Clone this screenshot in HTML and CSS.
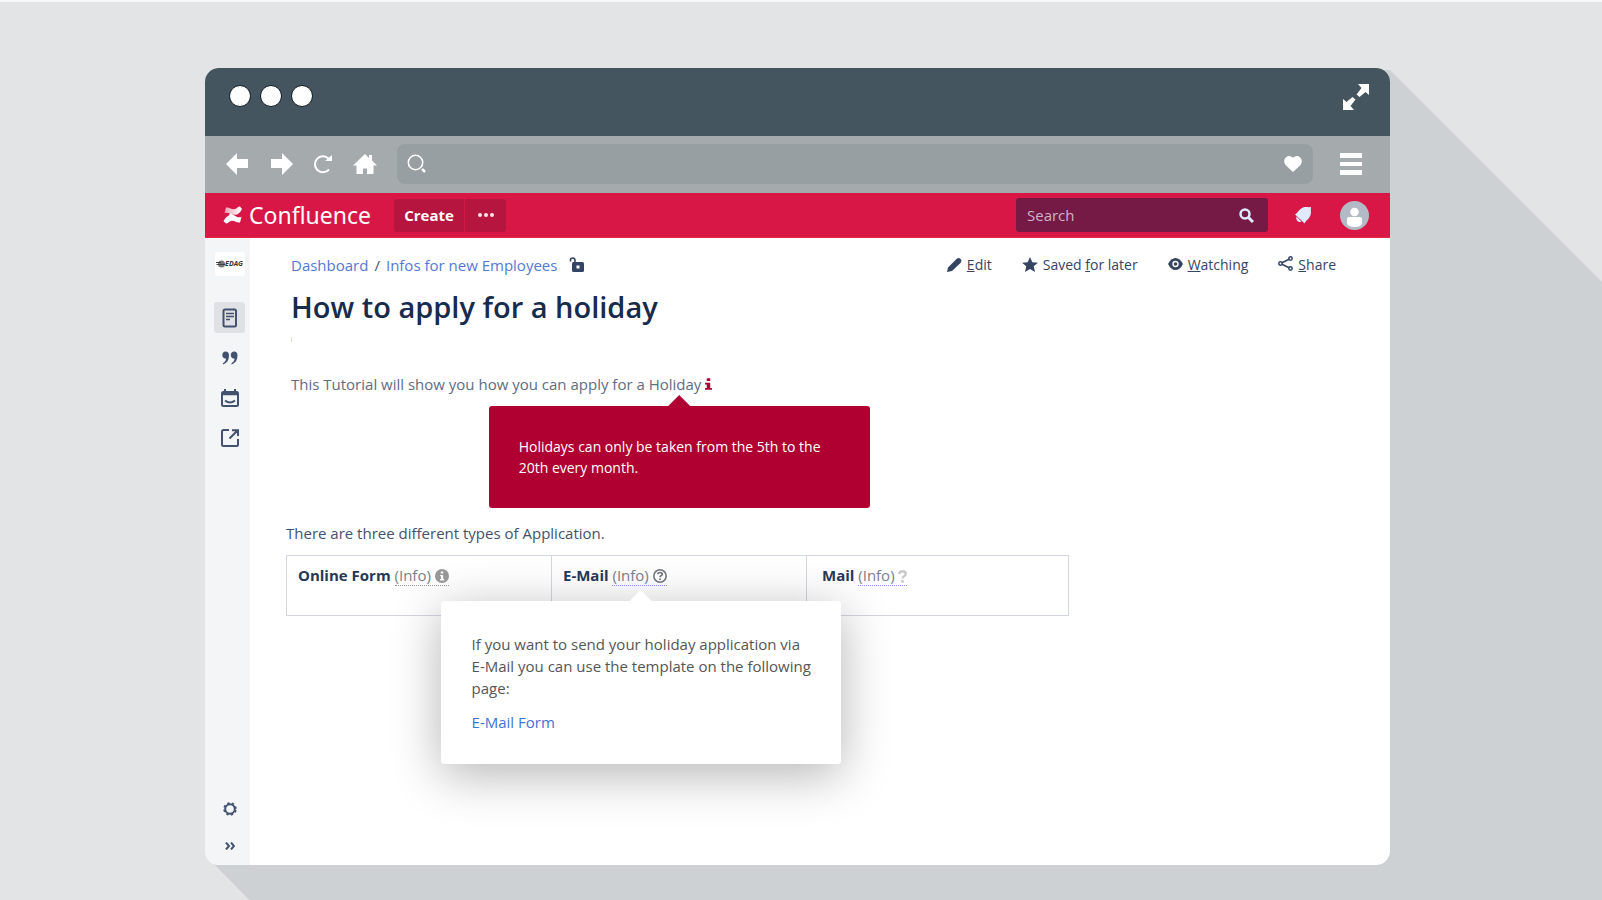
FILE: index.html
```html
<!DOCTYPE html>
<html lang="en">
<head>
<meta charset="utf-8">
<title>How to apply for a holiday - Confluence</title>
<link rel="stylesheet" href="styles.css">
</head>
<body>
<div class="stage">
  <div class="window-wrap">
    <div class="long-shadow"></div>
    <div class="window">
      <div class="titlebar">
        <div class="dots"><span class="dot"></span><span class="dot"></span><span class="dot"></span></div>
        <button class="icon-btn" aria-label="Full screen">
          <svg width="26" height="26" viewBox="0 0 26 26" fill="#fff"><path d="M15 0H26V11L22.500 8L16.500 13L13.500 10.500L18.500 4ZM0 26V15L3.500 18L9.500 13L12.500 15.500L7.500 22L11 26Z"/></svg>
        </button>
      </div>
      <div class="toolbar">
        <div class="nav">
          <button class="icon-btn" aria-label="Back"><svg width="22" height="22" viewBox="0 0 22 22" fill="#fff"><path d="M0 11L11 0V6H22V15H11V22Z"/></svg></button>
          <button class="icon-btn" aria-label="Forward"><svg width="22" height="22" viewBox="0 0 22 22" fill="#fff"><path d="M22 11L11 0V6H0V15H11V22Z"/></svg></button>
          <button class="icon-btn reload" aria-label="Reload"><svg width="20" height="20" viewBox="0 0 20 20" fill="none" stroke="#fff" stroke-width="2"><path d="M15.500 4.500A8 8 0 1 0 16 15.500"/><path d="M19 1V7H12Z" fill="#fff" stroke="none"/></svg></button>
          <button class="icon-btn" aria-label="Home"><svg width="24" height="20" viewBox="0 0 24 20" fill="#fff"><path d="M0 11.500L12 0L16 4V1H19V6.500L24 11.500H20.500V20H14V14.500H10V20H3.500V11.500Z"/></svg></button>
        </div>
        <div class="address">
          <svg width="20" height="20" viewBox="0 0 20 20" fill="none" stroke="#fff"><circle cx="8.500" cy="8.500" r="7.200" stroke-width="1.500"/><path d="M15 15L18 18" stroke-width="2.500"/></svg>
          <input class="address-input" type="text" aria-label="Address">
          <svg width="18" height="16" viewBox="0 0 18 16" fill="#fff"><path d="M9 16L2 9.500C-2 5 1.500 0 5 0C7 0 8.500 1 9 2C9.500 1 11 0 13 0C16.500 0 20 5 16 9.500Z"/></svg>
        </div>
        <button class="icon-btn" aria-label="Menu"><svg width="22" height="22" viewBox="0 0 22 22" fill="#fff"><path d="M0 0H22V5H0ZM0 9H22V13H0ZM0 17H22V22H0Z"/></svg></button>
      </div>
      <header class="appbar">
        <a class="brand" href="#">
          <svg width="20" height="20" viewBox="0 0 20 20">
            <defs><linearGradient id="fold" x1="0" x2="1"><stop offset="0" stop-color="#fff" stop-opacity=".6"/><stop offset="1" stop-color="#fff"/></linearGradient></defs>
            <path d="M3 2.500C7 2 8.500 5 12 4C14 3.500 15 1.500 17 1.500L19 4C17 8.500 14 10.500 10 9.500C7 8.500 5 7 1.500 8Z" fill="url(#fold)"/>
            <path d="M17 17.500C13 18 11.500 15 8 16C6 16.500 5 18.500 3 18.500L.500 16C3 11.500 6 9.500 10 10.500C13 11.500 15 13 18.500 12Z" fill="#fff"/>
            <path d="M7 8L14 12L9 12L5.500 11.500Z" fill="#fff"/>
          </svg>
          <span>Confluence</span>
        </a>
        <div class="create-group">
          <button class="create">Create</button>
          <button class="more" aria-label="More"><svg width="16" height="4" viewBox="0 0 16 4" fill="#ffe3ea"><circle cx="2" cy="2" r="2"/><circle cx="8" cy="2" r="2"/><circle cx="14" cy="2" r="2"/></svg></button>
        </div>
        <form class="search">
          <input class="search-input" type="text" placeholder="Search" aria-label="Search">
          <button type="button" class="icon-btn" aria-label="Search"><svg width="15" height="15" viewBox="0 0 15 15" fill="none" stroke="#deebff"><circle cx="6" cy="6" r="4.500" stroke-width="2.500"/><path d="M9.500 9.500L14 14" stroke-width="3"/></svg></button>
        </form>
        <button class="icon-btn bell" aria-label="Notifications"><svg width="18" height="18" viewBox="0 0 18 18" fill="#deebff"><path d="M1 8.500C4 7 5 3 9 1.500C12 .500 14 1.500 17 1C16.500 4 17.500 6 16.500 9C15.500 13 12 14 10.500 17.500L6.500 13.500ZM2.500 10.500L7.500 15.500C4.500 17 1.500 14.500 2.500 10.500Z"/></svg></button>
        <button class="icon-btn" aria-label="Profile"><svg width="29" height="29" viewBox="0 0 29 29"><circle cx="14.500" cy="14.500" r="14.500" fill="#b3bac5"/><circle cx="14.500" cy="11" r="4.300" fill="#fff"/><path d="M7 18Q7 16 9 16H20Q22 16 22 18V22Q22 26 14.500 26Q7 26 7 22Z" fill="#fff"/></svg></button>
      </header>
      <div class="body">
        <nav class="sidebar" aria-label="Space">
          <a class="space-logo" href="#" aria-label="EDAG"><svg width="9" height="8" viewBox="0 0 9 8" fill="#777"><ellipse cx="5.500" cy="4" rx="3.500" ry="3.500"/><path d="M0 2H5V3H0ZM1 4H9V5H0Z" fill="#444"/></svg><span>EDAG</span></a>
          <a class="side-item current" href="#" aria-label="Pages"><svg width="16" height="20" viewBox="0 0 16 20" fill="none" stroke="#42526e" stroke-width="2"><rect x="1.500" y="1.500" width="12.500" height="17" rx="1.500"/><path d="M4 5.500H12M4 8.500H12M4 11.500H8" stroke-width="1.500"/></svg></a>
          <a class="side-item" href="#" aria-label="Blog"><svg width="16" height="14" viewBox="0 0 16 14" fill="#42526e"><path d="M3.500 .500C5.800 .500 7 2 7 4.500C7 9 5 12 1.300 13.500L.800 12.500C3 11 4 9.500 4 7.500C2 8 .300 6.500 .300 4C.300 2 1.700 .500 3.500 .500ZM12 .500C14.300 .500 15.500 2 15.500 4.500C15.500 9 13.500 12 9.800 13.500L9.300 12.500C11.500 11 12.500 9.500 12.500 7.500C10.500 8 8.800 6.500 8.800 4C8.800 2 10.200 .500 12 .500Z"/></svg></a>
          <a class="side-item" href="#" aria-label="Calendars"><svg width="18" height="18" viewBox="0 0 18 18" fill="none" stroke="#42526e" stroke-width="2"><rect x="1" y="3" width="16" height="14" rx="1.500"/><path d="M1 4.500H17" stroke-width="3.500"/><path d="M4 0V3M14 0V3M4 11.500Q9 15.500 14 11.500"/></svg></a>
          <a class="side-item" href="#" aria-label="Shortcuts"><svg width="18" height="18" viewBox="0 0 18 18" fill="none" stroke="#42526e" stroke-width="2"><path d="M8 1H2.500Q1 1 1 2.500V15.500Q1 17 2.500 17H15.500Q17 17 17 15.500V10M8.500 9.500L16 2M11 1.200H17V7"/></svg></a>
          <div class="side-bottom">
            <button class="icon-btn" aria-label="Settings"><svg width="14" height="14" viewBox="0 0 14 14" fill="none" stroke="#42526e"><circle cx="7" cy="7" r="4.800" stroke-width="2"/><circle cx="7" cy="7" r="6" stroke-width="1.600" stroke-dasharray="2.300 2.412" stroke-dashoffset="-1.200"/></svg></button>
            <button class="icon-btn" aria-label="Expand sidebar"><svg width="10" height="8" viewBox="0 0 10 8" fill="none" stroke="#42526e" stroke-width="2"><path d="M1 .500L4 4L1 7.500M6 .500L9 4L6 7.500"/></svg></button>
          </div>
        </nav>
        <main class="content">
          <div class="page-head">
            <div class="crumbs">
              <a href="#">Dashboard</a><span class="slash">/</span><a href="#">Infos for new Employees</a>
              <svg class="lock" width="16" height="16" viewBox="0 0 16 16"><rect x="3" y="5" width="12" height="10" rx="1.500" fill="#344563"/><path d="M1.500 4.500V3Q1.500 1 3.500 1Q6 1 6 3.500V5" fill="none" stroke="#344563" stroke-width="1.600"/><rect x="7.500" y="8.500" width="3" height="3" fill="#fff"/></svg>
            </div>
            <div class="actions">
              <a href="#"><svg width="15" height="15" viewBox="0 0 15 15" fill="#344563"><path d="M0 14L1 9.500L9.500 1Q11.500 -.500 13 .500L14 1.500Q15 3 13.500 5L5 13Z"/></svg><span><u>E</u>dit</span></a>
              <a href="#"><svg width="16" height="17" viewBox="0 0 16 17" fill="#344563"><path d="M8 0L10.300 5.200L16 5.700L11.700 9.300L13 15L8 12L3 15L4.300 9.300L0 5.700L5.700 5.200Z"/></svg><span>Saved <u>f</u>or later</span></a>
              <a href="#"><svg width="15" height="15" viewBox="0 0 15 15"><path d="M0 6Q3 0 7.500 0Q12 0 15 6Q12 12 7.500 12Q3 12 0 6Z" fill="#344563"/><circle cx="7.500" cy="6" r="3.200" fill="#fff"/><circle cx="7.500" cy="6" r="1.800" fill="#344563"/></svg><span><u>W</u>atching</span></a>
              <a href="#"><svg width="15" height="18" viewBox="0 0 15 18" fill="none" stroke="#344563" stroke-width="1.500"><path d="M2.500 7.500L12.500 2.500M2.500 7.500L12.500 12.500"/><g fill="#fff"><circle cx="2.500" cy="7.500" r="1.700"/><circle cx="12.500" cy="2.500" r="1.700"/><circle cx="12.500" cy="12.500" r="1.700"/></g></svg><span><u>S</u>hare</span></a>
            </div>
          </div>
          <h1>How to apply for a holiday</h1>
          <div class="byline"></div>
          <p class="intro">This Tutorial will show you how you can apply for a <span class="anchor">Holiday <svg width="7" height="12" viewBox="0 0 8 13" fill="#b00032"><path d="M2 0H6V3H2ZM0 5H6V11H8V13H0V11H2V7H0Z"/></svg><span class="tip tip-red" role="tooltip">Holidays can only be taken from the 5th to the 20th every month.</span></span></p>
          <p class="types">There are three different types of Application.</p>
          <table>
            <tr>
              <th>Online Form <span class="info gray">(Info) <svg width="14" height="14" viewBox="0 0 14 14"><circle cx="7" cy="7" r="7" fill="#999"/><path d="M5.800 2.500H8.200V4.500H5.800ZM5 6H8.200V10H9.200V11.500H5V10H6V7.300H5Z" fill="#fff"/></svg></span></th>
              <th>E-Mail <span class="info anchor-mail">(Info) <svg width="14" height="14" viewBox="0 0 14 14" fill="none" stroke="#707580"><circle cx="7" cy="7" r="6.200" stroke-width="1.500"/><path d="M4.800 5.200Q5 3.500 7 3.500Q9.200 3.500 9.200 5.200Q9.200 6.200 8 6.800Q7 7.300 7 8.300M7 9.500V11" stroke-width="1.700"/></svg>
                <span class="tip tip-white" role="tooltip"><span>If you want to send your holiday application via E-Mail you can use the template on the following page:</span><a href="#">E-Mail Form</a></span></span></th>
              <th>Mail <span class="info">(Info) <svg width="9" height="13" viewBox="0 0 9 13" fill="none" stroke="#c8c8cc" stroke-width="2.400"><path d="M1.200 4Q1.500 1.300 4.500 1.300Q7.700 1.300 7.700 3.800Q7.700 5.300 6 6.200Q4.500 7 4.500 8.500M4.500 10V12.800"/></svg></span></th>
            </tr>
          </table>
        </main>
      </div>
    </div>
  </div>
</div>
</body>
</html>
```
FILE: styles.css
```css
* { box-sizing: border-box; }

body {
  margin: 0;
  font-family: "Open Sans", "Noto Sans", sans-serif;
  font-size: 15px;
  line-height: 22px;
  color: #42526e;
}

a { color: inherit; text-decoration: none; }
p, h1 { margin: 0; }
svg { display: block; flex: none; }
button, input { font: inherit; color: inherit; border: 0; background: none; padding: 0; }

.stage {
  display: flex;
  min-height: 100vh;
  padding: 66px 212px 35px 205px;
  border-top: 2px solid #f8f8f8;
  background: #e3e4e6;
  overflow: hidden;
}

.window-wrap { position: relative; display: flex; flex: 1; }

.long-shadow {
  position: absolute;
  inset: 0 -800px -800px 0;
  background: #cdd1d4;
  clip-path: polygon(calc(100% - 800px) 2px, 100% 802px, 100% 100%, 800px 100%, 0 calc(100% - 810px), 20px 20px);
}

.window {
  position: relative;
  display: flex;
  flex-direction: column;
  flex: 1;
  border-radius: 14px;
  background: #fff;
  overflow: hidden;
}

.icon-btn { display: flex; align-items: center; cursor: pointer; }

.titlebar {
  display: flex;
  justify-content: space-between;
  height: 68px;
  padding: 16px 21px 0 24px;
  background: #45555f;
}
.titlebar .icon-btn { height: 26px; }
.dots { display: flex; gap: 9px; padding-top: 1px; }
.dot { width: 22px; height: 22px; border: 1px solid #111b20; border-radius: 50%; background: #fff; }

.toolbar {
  display: flex;
  align-items: center;
  height: 57px;
  padding: 0 28px 2px 21px;
  background: #a5aaad;
}
.nav { display: flex; align-items: center; gap: 20px; width: 171px; }
.nav .icon-btn:nth-child(2) { margin-left: 3px; }
.address {
  display: flex;
  align-items: center;
  flex: 1;
  height: 40px;
  margin-right: 27px;
  padding: 0 11px 0 10px;
  border-radius: 8px;
  background: #989fa2;
}
.address-input { flex: 1; min-width: 0; color: #fff; }

.appbar {
  display: flex;
  align-items: center;
  height: 45px;
  padding: 0 21px 0 18px;
  background: #d91747;
  border-bottom: 1px solid #e8273f;
}
.brand {
  display: flex;
  align-items: center;
  gap: 6px;
  width: 171px;
  font-family: "Noto Sans", sans-serif;
  font-size: 23px;
  color: #fff;
}
.create-group { display: flex; gap: 1px; height: 33px; color: #fff; }
.create { width: 70px; border-radius: 3px 0 0 3px; background: #b5153f; font-weight: 700; }
.more { display: flex; align-items: center; justify-content: center; width: 41px; border-radius: 0 3px 3px 0; background: #b5153f; }
.search {
  display: flex;
  align-items: center;
  width: 252px;
  height: 34px;
  margin-left: auto;
  padding: 0 14px 0 11px;
  border-radius: 3px;
  background: #751945;
}
.search-input { flex: 1; min-width: 0; }
.search-input::placeholder { color: #cfb3cb; opacity: 1; }
.bell { margin: 0 28px 0 26px; }

.body { display: flex; flex: 1; }

.sidebar {
  display: flex;
  flex-direction: column;
  align-items: center;
  width: 45px;
  padding: 14px 0 15px 4px;
  background: #f4f5f7;
}
.space-logo {
  display: flex;
  align-items: center;
  justify-content: center;
  width: 30px;
  height: 24px;
  margin-bottom: 26px;
  border-radius: 2px;
  background: #fff;
  font-size: 7px;
  font-style: italic;
  font-weight: 700;
  color: #333;
}
.side-item {
  display: flex;
  align-items: center;
  justify-content: center;
  width: 31px;
  height: 31px;
  margin-bottom: 9px;
  border-radius: 3px;
}
.current { background: #dfe1e5; }
.side-bottom { display: flex; flex-direction: column; align-items: center; gap: 26px; margin-top: auto; }

.content { flex: 1; padding: 16px 54px 0 36px; }

.page-head { display: flex; justify-content: space-between; padding-left: 5px; }
.crumbs, .actions, .actions a { display: flex; align-items: center; }
.crumbs a { color: #5478d4; }
.slash { margin: 0 6px; }
.lock { margin-left: 12px; }
.actions { gap: 30px; font-size: 14px; color: #344563; }
.actions a { gap: 5px; }

h1 {
  margin: 11px 0 0 5px;
  font-size: 29px;
  font-weight: 600;
  line-height: 40px;
  color: #172b4d;
}
.byline { width: 1px; height: 5px; margin: 10px 0 0 5px; background: #f3d9c8; }
.intro { margin: 31px 0 0 5px; color: #5e6c84; }
.anchor, .anchor-mail { position: relative; }
.intro svg, .info > svg { display: inline-block; }
.types { margin: 127px 0 0; }

.tip { position: absolute; z-index: 1; border-radius: 3px; font-weight: 400; }
.tip::before {
  content: "";
  position: absolute;
  bottom: 100%;
  left: 50%;
  width: 22px;
  height: 11px;
  margin-left: -11px;
  clip-path: polygon(50% 0, 100% 100%, 0 100%);
  background: inherit;
}
.tip-red {
  top: 32px;
  left: -160px;
  width: 381px;
  padding: 30px;
  background: #b00032;
  font-size: 14px;
  line-height: 21px;
  color: #fff;
}
.tip-white {
  display: flex;
  flex-direction: column;
  gap: 12px;
  top: 35px;
  left: 50%;
  width: 400px;
  margin-left: -199px;
  padding: 32px 28px 31px 31px;
  background: #fff;
  box-shadow: 0 10px 50px rgba(0, 0, 0, .3);
  color: #555;
}
.tip-white a { color: #3d73d6; }

table { width: 783px; height: 61px; margin-top: 11px; border-collapse: collapse; table-layout: fixed; }
th {
  padding: 8px 11px;
  border: 1px solid #d3d7dd;
  text-align: left;
  vertical-align: top;
  font-weight: 700;
  color: #253858;
}
th:nth-child(1) { width: 265px; }
th:nth-child(2) { width: 255px; }
th:nth-child(3) { padding-left: 15px; }
.info { display: inline-block; border-bottom: 1px dotted #8f8ff5; line-height: 19px; font-weight: 400; color: #7a7f8a; }
.info > svg { vertical-align: -2px; }
.info .tip { line-height: 22px; }
.gray { border-color: #999; }
```
